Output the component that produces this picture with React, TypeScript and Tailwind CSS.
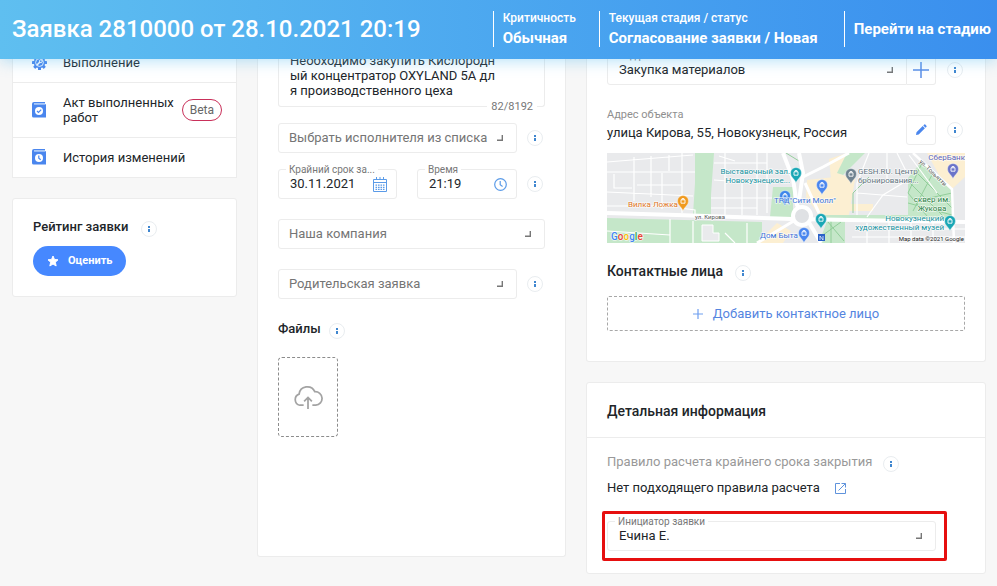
import React, { useId } from "react";

function Info() {
  return (
    <button
      type="button"
      aria-label="Подсказка"
      className="flex size-4 shrink-0 items-center justify-center rounded-full border border-[#e9edf0] bg-white"
    >
      <svg width="2" height="6" viewBox="0 0 2 6" shapeRendering="crispEdges" fill="#3f86cf">
        <rect width="2" height="2" />
        <rect y="3" width="2" height="3" />
      </svg>
    </button>
  );
}

function Corner() {
  return (
    <svg
      className="pointer-events-none absolute top-[11px] right-[13px]"
      width="6"
      height="6"
      viewBox="0 0 6 6"
      fill="none"
      stroke="#777"
      strokeWidth="1.4"
    >
      <path d="M0 5.3H5.3V0" />
    </svg>
  );
}

function FloatLabel({ htmlFor, children }: { htmlFor: string; children: React.ReactNode }) {
  return (
    <label
      htmlFor={htmlFor}
      className="absolute -top-[6px] left-[7px] bg-white px-[3px] text-[10px] leading-3 whitespace-nowrap text-[#777]"
    >
      {children}
    </label>
  );
}

type SelectFieldProps = { value: string; label?: string; muted?: boolean; flatRight?: boolean };

function SelectField({ value, label, muted, flatRight }: SelectFieldProps) {
  const id = useId();
  return (
    <div
      className={
        "relative h-[30px] min-w-0 flex-1 border border-[#ececec] bg-white " +
        (flatRight ? "rounded-l-[3px]" : "rounded-[3px]")
      }
    >
      {label && <FloatLabel htmlFor={id}>{label}</FloatLabel>}
      <select
        id={id}
        aria-label={label ? undefined : value}
        className={
          "block h-7 w-full appearance-none bg-transparent text-[13px] outline-none " +
          (muted ? "pl-[10px] text-[#757575]" : "pl-[11px] text-[#212529]")
        }
      >
        <option>{value}</option>
      </select>
      <Corner />
    </div>
  );
}

function InputField({ label, value, children }: { label: string; value: string; children: React.ReactNode }) {
  const id = useId();
  return (
    <div className="relative flex h-[30px] min-w-0 items-center rounded-[3px] border border-[#ececec] pr-[9px] pl-[11px]">
      <FloatLabel htmlFor={id}>{label}</FloatLabel>
      <input id={id} defaultValue={value} className="w-0 flex-1 bg-transparent text-[13px] text-[#212529] outline-none" />
      {children}
    </div>
  );
}

function CalendarIcon() {
  return (
    <svg width="14" height="15" viewBox="0 0 14 15" fill="none" stroke="#5b9be8">
      <path d="M.5 2.5h13v12H.5zM.5 5.5h13M3.5 0v3M10.5 0v3M7 0v3" />
      <path d="M2.5 8.2h9M2.5 10.3h9M2.5 12.4h9" strokeWidth="1.3" strokeDasharray="1.6 .9" />
    </svg>
  );
}

function ClockIcon() {
  return (
    <svg width="13" height="13" viewBox="0 0 13 13" fill="none" stroke="#5b9be8" strokeWidth="1.2">
      <circle cx="6.5" cy="6.5" r="5.8" />
      <path d="M6.2 3v3.8l2.4 1.6" />
    </svg>
  );
}

function GearIcon() {
  const teeth = [0, 45, 90, 135, 180, 225, 270, 315];
  return (
    <svg width="15" height="15" viewBox="0 0 15 15">
      <g fill="#4a86ee">
        {teeth.map((a) => (
          <rect key={a} x="6" y="0" width="3" height="4" rx=".6" transform={`rotate(${a} 7.5 7.5)`} />
        ))}
        <circle cx="7.5" cy="7.5" r="5.7" />
      </g>
      <circle cx="7.5" cy="7.5" r="3.9" fill="none" stroke="#fff" strokeWidth=".9" />
      <path d="M5 10l3.2-3.2" stroke="#fff" strokeWidth="1.5" />
      <circle cx="8.8" cy="6.2" r="1.4" fill="none" stroke="#fff" strokeWidth="1" />
    </svg>
  );
}

function BookIcon({ mark }: { mark: string }) {
  return (
    <svg width="14" height="16" viewBox="0 0 14 16">
      <path d="M2 0H13v1H2.2v1.2H14V15.5H1.5Q0 15.5 0 14V2Q0 0 2 0Z" fill="#4a86ee" />
      <path d="M2 1H13v1.6H2Z" fill="#a9c9f9" />
      <circle cx="7" cy="9" r="4" fill="#fff" />
      <path d={mark} fill="none" stroke="#4a86ee" strokeWidth="1.2" />
    </svg>
  );
}

function NavRow({ icon, children }: { icon: React.ReactNode; children: React.ReactNode }) {
  return (
    <a
      href="#"
      className="flex items-center border-b border-[#ececec] py-3 pr-[14px] pl-[18px] text-[13px] text-[#212529] last:pt-[11px]"
    >
      <span className="flex h-4 w-4 shrink-0 items-center justify-center">{icon}</span>
      <span className="ml-4 flex-1 leading-[15px]">{children}</span>
    </a>
  );
}

function Pin({ x, y, color }: { x: number; y: number; color: string }) {
  return (
    <g transform={`translate(${x} ${y})`}>
      <path d="M0 10C-1 6-5.5 4.500-5.500 0A5.500 5.500 0 0 1 5.500 0C5.500 4.500 1 6 0 10Z" fill={color} stroke="#fff" strokeWidth=".4" />
      <path d="M-2-1.200H2V2.200H-2ZM-1-1.200V-2.400H1V-1.200" fill="none" stroke="#fff" strokeWidth=".9" />
    </g>
  );
}

function CityMap() {
  return (
    <svg
      role="img"
      aria-label="Карта"
      className="block h-[90px] w-full font-['Roboto','Noto_Sans',sans-serif]"
      viewBox="0 0 358 90"
      preserveAspectRatio="xMidYMid slice"
    >
      <rect width="358" height="90" fill="#e9eaec" />
      <g fill="#c5e7c9">
        <path d="M88 0H107L104 42V62H86L88 30Z" />
        <path d="M0 65L155 69V90H0Z" />
        <path d="M166 34H186V64H163Z" />
        <path d="M240 0H258L236 22L224 20Z" />
        <path d="M214 62H345V66H214Z" />
        <path d="M220 68H238V90H212Z" />
        <path d="M301 25L315 8L345 38V63H301Z" />
      </g>
      <g fill="#fcefd2">
        <path d="M200 27L228 24L241 62H212L199 44Z" />
        <path d="M222 6L240 0L230 20L248 26L242 62L232 58L224 26Z" />
        <path d="M320 0H358V24L345 36L332 22Z" />
        <path d="M150 90L170 70L184 78L176 90Z" />
        <path d="M240 51H266V58H240Z" />
      </g>
      <g fill="none" stroke="#8ccb94" strokeWidth=".9">
        <path d="M308 18L345 55M301 28L336 63M315 10L301 40L320 63M326 20L306 58M345 40L318 46M301 50L345 62" />
        <path d="M216 82L234 69M221 69L237 88M224 90V68M179 0L192 8" />
        <path d="M246 60V40L262 24" />
      </g>
      <g fill="none" stroke="#fff" strokeWidth="1.200">
        <path d="M0 9L86 2M0 19H88M0 39L86 43M27 4V48M7 21V35H25M44 3V44M62 2V18M75 0V60M0 53H62M30 32H75M55 20V56M73 55L88 57V64" />
        <path d="M107 10H160M107 27L150 30M104 45H165M118 0V62M135 30V62M150 0V62M112 3L128 8M160 0V60M104 55H150" />
        <path d="M63 66V90M0 78L63 82M86 68V90M118 80L128 90M140 70V90" />
        <path d="M250 40L300 44M260 64L276 42L296 30M262 0L250 30V62M280 0V30M302 2L330 40M248 76H358M245 84H358M260 70V90M282 68V90M304 70V90M326 70V90M290 0L300 20" />
      </g>
      <g fill="none" stroke="#fff">
        <path d="M0 60L70 62L186 66L358 69" strokeWidth="4" />
        <path d="M176 0L186 26L190 52L200 66L214 90" strokeWidth="4" />
        <path d="M192 0L196 20L192 48" strokeWidth="4" />
        <path d="M242 0L216 14L196 24M198 30L212 60M150 90L190 66" strokeWidth="3" />
        <path d="M306 0L345 36L347 90" strokeWidth="2.500" />
        <circle cx="195" cy="63" r="9" strokeWidth="4" fill="#dfe1e4" />
      </g>
      <path d="M95 72H106V80H112V88H95Z" fill="#e9eaec" stroke="#fff" />

      <Pin x={76} y={48} color="#f09a1f" />
      <Pin x={178} y={43} color="#3f87ea" />
      <Pin x={189} y={20} color="#1aa7b5" />
      <Pin x={215} y={32} color="#4a86ee" />
      <Pin x={244} y={21} color="#6f8290" />
      <Pin x={346} y={16} color="#6b74c9" />
      <Pin x={343} y={68} color="#1aa7b5" />
      <Pin x={214} y={66} color="#1aa7b5" />
      <Pin x={197} y={80} color="#4a86ee" />
      <rect x="211" y="81" width="7" height="7" fill="#2b62c8" />
      <path d="M213 87V83L216 87V83" fill="none" stroke="#fff" strokeWidth=".7" />

      <g fontSize="8" stroke="#fff" strokeWidth="1.500" strokeOpacity=".7" paintOrder="stroke" strokeLinejoin="round">
        <g fill="#14919e">
          <text x="183" y="21" textAnchor="end">Выставочный зал.</text>
          <text x="183" y="30" textAnchor="end">Новокузнецкое...</text>
          <text x="337" y="68" textAnchor="end">Новокузнецкий</text>
          <text x="337" y="77" textAnchor="end">художественный музей</text>
        </g>
        <text x="21" y="54" fill="#e0751c">Вилка Ложка</text>
        <g fill="#3c73d8">
          <text x="167" y="50">ТРЦ"Сити Молл"</text>
          <text x="153" y="85">Дом Быта</text>
        </g>
        <g fill="#64757f">
          <text x="251" y="21">GESH.RU. Центр</text>
          <text x="251" y="30">бронирования...</text>
        </g>
        <text x="358" y="7" textAnchor="end" fill="#5b62b8">СберБанк</text>
        <g fill="#2f8247" textAnchor="middle">
          <text x="325" y="49">сквер им.</text>
          <text x="325" y="58">Жукова</text>
        </g>
        <g fontSize="6" fill="#555">
          <text x="88" y="66">ул. Кирова</text>
          <text x="357" y="88" textAnchor="end" fill="#222">Map data ©2021 Google</text>
          <text transform="translate(312 9) rotate(44)">ул. Тольятти</text>
        </g>
        <text x="4" y="87" fontSize="10" fontWeight="500">
          <tspan fill="#4285f4">G</tspan>
          <tspan fill="#ea4335">o</tspan>
          <tspan fill="#fbbc05">o</tspan>
          <tspan fill="#4285f4">g</tspan>
          <tspan fill="#34a853">l</tspan>
          <tspan fill="#ea4335">e</tspan>
        </text>
      </g>
    </svg>
  );
}

export default function App() {
  return (
    <div className="min-h-screen bg-[#f7f7f7] pb-3 font-['Roboto','Noto_Sans',sans-serif] text-[#212529]">
      <header className="sticky top-0 z-10 flex h-[59px] items-center bg-linear-to-r from-[#5fbff0] to-[#3a8fee] pr-[6px] pb-px pl-3 text-white shadow-[0_2px_14px_rgba(91,188,240,0.45)]">
        <h1 className="flex-1 text-2xl font-medium whitespace-nowrap">Заявка 2810000 от 28.10.2021 20:19</h1>
        <div className="h-9 w-[106px] border-l border-white pl-[9px]">
          <div className="text-xs leading-[14px] font-medium">Критичность</div>
          <div className="mt-[3px] text-[15px] leading-5 font-bold">Обычная</div>
        </div>
        <div className="h-9 w-[245px] border-l border-white pl-[9px] whitespace-nowrap">
          <div className="text-xs leading-[14px] font-medium">Текущая стадия / статус</div>
          <div className="mt-[3px] text-[15px] leading-5 font-bold">Согласование заявки / Новая</div>
        </div>
        <div className="flex h-9 items-center border-l border-white pl-[9px]">
          <button type="button" className="text-[15px] font-bold whitespace-nowrap">
            Перейти на стадию
          </button>
        </div>
      </header>

      <main className="-mt-[17px] grid grid-cols-[225px_309fr_400fr] items-start gap-5 pr-[11px] pl-3">
        <aside className="flex flex-col gap-5">
          <nav className="border-x border-[#ececec] bg-white">
            <NavRow icon={<GearIcon />}>Выполнение</NavRow>
            <NavRow icon={<BookIcon mark="M5 9l1.500 1.500L9.200 7.600" />}>
              <span className="flex items-center justify-between">
                <span>
                  Акт выполненных
                  <br />
                  работ
                </span>
                <span className="rounded-full border border-[#c9305a] px-[7px] py-[2px] text-xs leading-4 text-[#666]">Beta</span>
              </span>
            </NavRow>
            <NavRow icon={<BookIcon mark="M6.800 6.500V9.200L8.700 10.800" />}>История изменений</NavRow>
          </nav>
          <section className="rounded-[3px] border border-[#ececec] bg-white px-5 pt-[18px] pb-5">
            <div className="flex items-end gap-[13px]">
              <h2 className="text-[13px] leading-5 font-medium">Рейтинг заявки</h2>
              <Info />
            </div>
            <button
              type="button"
              className="mt-[9px] flex h-[30px] items-center gap-[9px] rounded-full bg-[#4688ff] px-[14px] text-[11px] font-bold text-white"
            >
              <svg width="12" height="12" viewBox="0 0 24 24" fill="#fff" stroke="#fff" strokeWidth="2" strokeLinejoin="round">
                <path d="M12 2l3 7 7 .6-5.300 4.800L18.300 22 12 18l-6.300 4 1.600-7.600L2 9.600 9 9z" />
              </svg>
              Оценить
            </button>
          </section>
        </aside>

        <section className="flex min-h-[515px] flex-col rounded-b-[3px] border-x border-b border-[#ececec] bg-white px-5">
          <div className="relative">
            <textarea
              aria-label="Описание"
              rows={3}
              className="block h-[65px] w-full resize-none overflow-hidden rounded-b-[3px] border border-t-0 border-[#ececec] px-[11px] pt-[11px] text-[13px] leading-[15px] outline-none"
              defaultValue={"Необходимо закупить Кислородн\nый концентратор OXYLAND 5А дл\nя производственного цеха"}
            />
            <span className="absolute right-2 -bottom-2 bg-white px-1 text-[11px] leading-4 text-[#777]">82/8192</span>
          </div>
          <div className="mt-4 flex items-center gap-[10px] pr-[2px]">
            <SelectField value="Выбрать исполнителя из списка" muted />
            <Info />
          </div>
          <div className="mt-4 flex items-center gap-[10px] pr-[2px]">
            <div className="grid flex-1 grid-cols-[119fr_100fr] gap-5">
              <InputField label="Крайний срок за..." value="30.11.2021">
                <CalendarIcon />
              </InputField>
              <InputField label="Время" value="21:19">
                <ClockIcon />
              </InputField>
            </div>
            <Info />
          </div>
          <div className="mt-5 flex">
            <SelectField value="Наша компания" muted />
          </div>
          <div className="mt-5 flex items-center gap-[10px] pr-[2px]">
            <SelectField value="Родительская заявка" muted />
            <Info />
          </div>
          <div className="mt-5 flex items-end gap-2">
            <h2 className="text-[13px] leading-5 font-medium">Файлы</h2>
            <Info />
          </div>
          <button
            type="button"
            aria-label="Загрузить файл"
            className="mt-[18px] flex h-20 w-[60px] items-center justify-center rounded-[4px] border border-dashed border-[#8c8c8c]"
          >
            <svg width="30" height="25" viewBox="0 0 31 25" fill="none" stroke="#a3a3a3" strokeWidth="1.800">
              <path d="M11 20.500H7A6 6 0 0 1 6.300 9A8.500 8.500 0 0 1 22.500 6.500A7 7 0 0 1 23.500 20.500H20M15.500 24.500V13M11.500 16.500L15.500 12.500L19.500 16.500" />
            </svg>
          </button>
        </section>

        <div className="flex min-w-0 flex-col gap-5">
          <section className="rounded-b-[3px] border-x border-b border-[#ececec] bg-white px-5 pt-[13px] pb-[30px]">
            <div className="flex items-center pr-[2px]">
              <SelectField label="Вид работ" value="Закупка материалов" flatRight />
              <button
                type="button"
                aria-label="Добавить"
                className="flex h-[30px] w-[29px] items-center justify-center rounded-r-[3px] border border-l-0 border-[#ececec]"
              >
                <svg width="16" height="16" viewBox="0 0 16 16" stroke="#5b8fe8" strokeWidth="1.500">
                  <path d="M8 0V16M0 8H16" />
                </svg>
              </button>
              <span className="ml-[11px] flex">
                <Info />
              </span>
            </div>

            <div className="mt-[22px] flex items-start">
              <div className="flex-1">
                <div className="text-[11px] leading-4 text-[#8f8f8f]">Адрес объекта</div>
                <div className="text-[13px] leading-5">улица Кирова, 55, Новокузнецк, Россия</div>
              </div>
              <div className="flex items-center pt-2 pr-[2px]">
                <button
                  type="button"
                  aria-label="Изменить адрес"
                  className="flex h-[30px] w-[30px] items-center justify-center rounded-[3px] border border-[#ececec]"
                >
                  <svg width="12" height="12" viewBox="0 0 12 12" fill="#4a86ee">
                    <path d="M1 11L1.500 8.300L7.700 2.100L9.900 4.300L3.700 10.500ZM8.300 1.500L9.300.5Q9.800.1 10.300.6L11.400 1.700Q11.900 2.200 11.500 2.700L10.500 3.700Z" />
                  </svg>
                </button>
                <span className="ml-[11px] flex">
                  <Info />
                </span>
              </div>
            </div>
            <div className="mt-2">
              <CityMap />
            </div>
            <div className="mt-[18px] flex items-end gap-3">
              <h2 className="text-sm leading-5 font-medium">Контактные лица</h2>
              <Info />
            </div>
            <button
              type="button"
              className="mt-[15px] flex h-[35px] w-full items-center justify-center gap-[10px] rounded-[2px] border border-dashed border-[#a8a8a8] text-[13px] text-[#5585df]"
            >
              <svg width="10" height="10" viewBox="0 0 10 10" stroke="#6f9ff0" strokeWidth="1.200">
                <path d="M5 0V10M0 5H10" />
              </svg>
              Добавить контактное лицо
            </button>
          </section>

          <section className="rounded-[3px] border border-[#ececec] bg-white">
            <h2 className="border-b border-[#ececec] px-5 pt-[18px] pb-4 text-sm leading-5 font-medium">Детальная информация</h2>
            <div className="px-5 pt-[14px] pb-[22px]">
              <div className="flex items-end gap-[11px]">
                <div className="text-[13px] leading-5 text-[#999]">Правило расчета крайнего срока закрытия</div>
                <Info />
              </div>
              <div className="mt-[6px] flex items-center gap-[15px]">
                <div className="text-[13px] leading-5">Нет подходящего правила расчета</div>
                <a href="#" aria-label="Открыть правило">
                  <svg width="11" height="11" viewBox="0 0 11 11" fill="none" stroke="#5f93dc">
                    <path d="M5 .5H.5V10.500H10.500V6M6.500 .5H10.500V4.500M10.300 .7L3.500 7.500" />
                  </svg>
                </a>
              </div>
              <div className="relative mt-[23px] mr-[29px] flex">
                <SelectField label="Инициатор заявки" value="Ечина Е." />
                <span className="pointer-events-none absolute -inset-x-[5px] -inset-y-[10px] -right-[11px] rounded-[2px] border-3 border-[#e60f0f]" />
              </div>
            </div>
          </section>
        </div>
      </main>
    </div>
  );
}
